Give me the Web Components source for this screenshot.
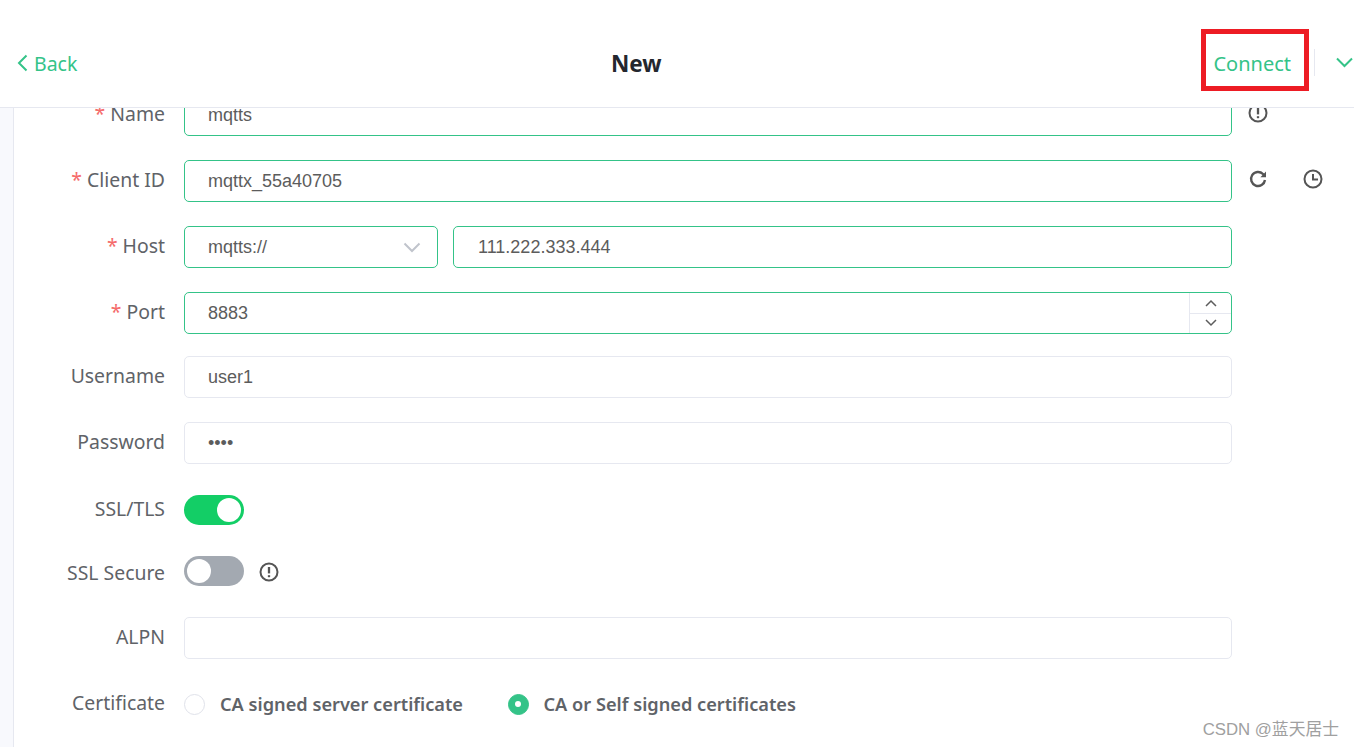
<!DOCTYPE html>
<html>
<head>
<meta charset="utf-8">
<title>New</title>
<style>
  html, body { margin: 0; height: 100%; }
  body { overflow: hidden; background: #fff; font-family: "Noto Sans", "Noto Sans CJK SC", sans-serif; }
</style>
</head>
<body>
<conn-page>
  <conn-header slot="header"></conn-header>
  <form-row label="Name" required>
    <text-box value="mqtts" active></text-box>
    <svg-icon slot="after" name="info"></svg-icon>
  </form-row>
  <form-row label="Client ID" required>
    <text-box value="mqttx_55a40705" active></text-box>
    <svg-icon slot="after" name="refresh"></svg-icon>
    <svg-icon slot="after" name="clock"></svg-icon>
  </form-row>
  <form-row label="Host" required>
    <div style="display:flex;gap:15px">
      <text-box value="mqtts://" active select style="width:254px;flex:none"></text-box>
      <text-box value="111.222.333.444" active inset style="flex:1"></text-box>
    </div>
  </form-row>
  <form-row label="Port" required gap="22">
    <text-box value="8883" active stepper></text-box>
  </form-row>
  <form-row label="Username">
    <text-box value="user1"></text-box>
  </form-row>
  <form-row label="Password" gap="31">
    <text-box value="••••"></text-box>
  </form-row>
  <form-row label="SSL/TLS" compact gap="31">
    <toggle-switch on></toggle-switch>
  </form-row>
  <form-row label="SSL Secure" compact low gap="31">
    <div style="display:flex;align-items:center;gap:15px">
      <toggle-switch></toggle-switch>
      <svg-icon name="info" style="margin-top:1px"></svg-icon>
    </div>
  </form-row>
  <form-row label="ALPN" gap="30">
    <text-box value=""></text-box>
  </form-row>
  <form-row label="Certificate" compact>
    <div style="display:flex;gap:44.5px;align-items:center">
      <radio-item label="CA signed server certificate"></radio-item>
      <radio-item label="CA or Self signed certificates" checked></radio-item>
    </div>
  </form-row>
  <water-mark slot="overlay">CSDN @蓝天居士</water-mark>
</conn-page>

<script>
const GREEN = "#34c388";

const ICONS = {
  info: `<circle cx="10" cy="10" r="8.5"/><path d="M10 5v6.4" stroke-width="2.3"/><path d="M10 13.2v2" stroke-width="2.3"/>`,
  refresh: `<path d="M17 11a7 7 0 1 1-2-6l2 2" stroke-width="2.4"/><path d="M18 2.6v5.6h-5.6z" fill="currentColor" stroke="none"/>`,
  clock: `<circle cx="10" cy="10" r="8.5"/><path d="M10 5v5.6h5"/>`
};

class SvgIcon extends HTMLElement {
  connectedCallback() {
    const root = this.attachShadow({ mode: "open" });
    root.innerHTML = `<style>
      :host { display: inline-flex; width: 20px; height: 20px; color: #555; }
      svg { width: 20px; height: 20px; fill: none; stroke: currentColor; stroke-width: 2; }
    </style><svg viewBox="0 0 20 20">${ICONS[this.getAttribute("name")]}</svg>`;
  }
}
customElements.define("svg-icon", SvgIcon);

class ConnPage extends HTMLElement {
  constructor() {
    super();
    this.attachShadow({ mode: "open" }).innerHTML = `<style>
      :host { display: flex; flex-direction: column; height: 747px; position: relative; overflow: hidden; }
      .body { flex: 1; min-height: 0; display: flex; overflow: hidden; }
      .rail { width: 13px; flex: none; background: #f8f9fd; border-right: 1px solid #e6e8f0; }
      .form { flex: 1; margin-top: -14px; }
    </style>
    <slot name="header"></slot>
    <div class="body"><div class="rail"></div><div class="form"><slot></slot></div></div>
    <slot name="overlay"></slot>`;
  }
}
customElements.define("conn-page", ConnPage);

class ConnHeader extends HTMLElement {
  constructor() {
    super();
    this.attachShadow({ mode: "open" }).innerHTML = `<style>
      :host { display: flex; align-items: center; height: 108px; padding-top: 18px; box-sizing: border-box; flex: none;
        border-bottom: 1px solid #e6e8f0; position: relative; background: #fff; z-index: 2; }
      .back { width: 611px; padding-left: 17px; box-sizing: border-box; display: flex; align-items: center; gap: 6px;
        color: ${GREEN}; font-size: 19.5px; }
      .back span, .connect { padding-top: 2px; }
      h1 { margin: 0; padding-top: 2px; font-size: 22.5px; font-weight: 700; color: #24272e; }
      .right { margin-left: auto; display: flex; align-items: center; color: ${GREEN}; font-size: 20px; }
      .connect { margin-right: 23px; }
      .sep { width: 1px; height: 27px; background: #e6e8f0; margin-right: 21px; }
      .chev { margin-right: 1px; display: block; }
      .mark { position: absolute; left: 1201px; top: 29px; width: 108px; height: 62px; box-sizing: border-box;
        border: 5px solid #ed1c24; }
    </style>
    <div class="back">
      <svg width="11" height="18" viewBox="0 0 11 18" fill="none" stroke="currentColor" stroke-width="2"><path d="M9.5 1.5 2 9l7.5 7.5"/></svg>
      <span>Back</span>
    </div>
    <h1>New</h1>
    <div class="right">
      <span class="connect">Connect</span>
      <span class="sep"></span>
      <svg class="chev" width="17" height="11" viewBox="0 0 17 11" fill="none" stroke="currentColor" stroke-width="2"><path d="M1 1.5 8.5 9 16 1.5"/></svg>
    </div>
    <div class="mark"></div>`;
  }
}
customElements.define("conn-header", ConnHeader);

class FormRow extends HTMLElement {
  connectedCallback() {
    const req = this.hasAttribute("required") ? `<i>*</i> ` : "";
    const gap = this.getAttribute("gap") || 24;
    const shift = this.hasAttribute("low") ? "padding-top: 4px;" : "padding-bottom: 2px;";
    this.attachShadow({ mode: "open" }).innerHTML = `<style>
      :host { display: flex; align-items: center; height: ${this.hasAttribute("compact") ? 30 : 42}px; margin-bottom: ${gap}px; }
      .label { width: 170px; flex: none; padding-right: 19px; box-sizing: border-box; ${shift}
        text-align: right; font-size: 19.4px; line-height: 24px; color: #5f6368; white-space: nowrap; }
      i { color: #f56c6c; font-style: normal; }
      .ctl { width: 1048px; flex: none; }
      .after { display: flex; gap: 35px; margin-left: 16px; margin-top: -4px; }
    </style>
    <div class="label">${req}${this.getAttribute("label")}</div>
    <div class="ctl"><slot></slot></div>
    <div class="after"><slot name="after"></slot></div>`;
  }
}
customElements.define("form-row", FormRow);

class TextBox extends HTMLElement {
  connectedCallback() {
    const active = this.hasAttribute("active");
    const select = this.hasAttribute("select") ? `<svg class="arr" width="18" height="11" viewBox="0 0 18 11" fill="none" stroke="#c0c4cc" stroke-width="2"><path d="M1.5 1.5 9 9l7.5-7.5"/></svg>` : "";
    const stepper = this.hasAttribute("stepper") ? `<div class="step">
      <span><svg width="12" height="8" viewBox="0 0 12 8" fill="none" stroke="#5c5c5c" stroke-width="1.5"><path d="M1 7l5-5 5 5"/></svg></span>
      <span><svg width="12" height="8" viewBox="0 0 12 8" fill="none" stroke="#5c5c5c" stroke-width="1.5"><path d="M1 1l5 5 5-5"/></svg></span>
    </div>` : "";
    this.attachShadow({ mode: "open" }).innerHTML = `<style>
      :host { display: block; }
      .box { height: 42px; box-sizing: border-box; border: 1px solid ${active ? GREEN : "#e6e8f0"}; border-radius: 5px;
        display: flex; align-items: center; padding-left: ${this.hasAttribute("inset") ? 24 : 23}px;
        font: 18px/20px "Liberation Sans", sans-serif; color: #5c5c5c; background: #fff; }
      .val { flex: 1; }
      .arr { margin-right: 16px; }
      .step { align-self: stretch; width: 41px; border-left: 1px solid #e6e8f0; display: flex; flex-direction: column; }
      .step span { flex: 1; display: flex; align-items: center; justify-content: center; }
      .step span + span { border-top: 1px solid #e6e8f0; }
    </style>
    <div class="box"><span class="val">${this.getAttribute("value")}</span>${select}${stepper}</div>`;
  }
}
customElements.define("text-box", TextBox);

class ToggleSwitch extends HTMLElement {
  connectedCallback() {
    const on = this.hasAttribute("on");
    this.attachShadow({ mode: "open" }).innerHTML = `<style>
      :host { display: block; width: 60px; height: 30px; border-radius: 15px; background: ${on ? "#13ce66" : "#a3a9b1"}; position: relative; }
      b { position: absolute; top: 3px; ${on ? "right" : "left"}: 3px; width: 24px; height: 24px; border-radius: 50%; background: #fff; }
    </style><b></b>`;
  }
}
customElements.define("toggle-switch", ToggleSwitch);

class RadioItem extends HTMLElement {
  connectedCallback() {
    const on = this.hasAttribute("checked");
    this.attachShadow({ mode: "open" }).innerHTML = `<style>
      :host { display: inline-flex; align-items: center; gap: 15px; font-size: 18.2px; font-weight: 600; color: #5f6368; }
      .dot { width: 21px; height: 21px; box-sizing: border-box; border-radius: 50%; border: 1px solid ${on ? GREEN : "#e0e2ea"};
        background: ${on ? GREEN : "#fff"}; display: flex; align-items: center; justify-content: center; }
      .dot::after { content: ""; width: 6px; height: 6px; border-radius: 50%; background: #fff; display: ${on ? "block" : "none"}; }
      .txt { padding-bottom: 1px; line-height: 24px; }
    </style><span class="dot"></span><span class="txt">${this.getAttribute("label")}</span>`;
  }
}
customElements.define("radio-item", RadioItem);

class WaterMark extends HTMLElement {
  constructor() {
    super();
    this.attachShadow({ mode: "open" }).innerHTML = `<style>
      :host { position: absolute; right: 15px; bottom: 7px; font: 16.8px "Liberation Sans", "Noto Sans CJK SC", sans-serif; color: #a0a0a0; }
    </style><slot></slot>`;
  }
}
customElements.define("water-mark", WaterMark);
</script>
</body>
</html>
